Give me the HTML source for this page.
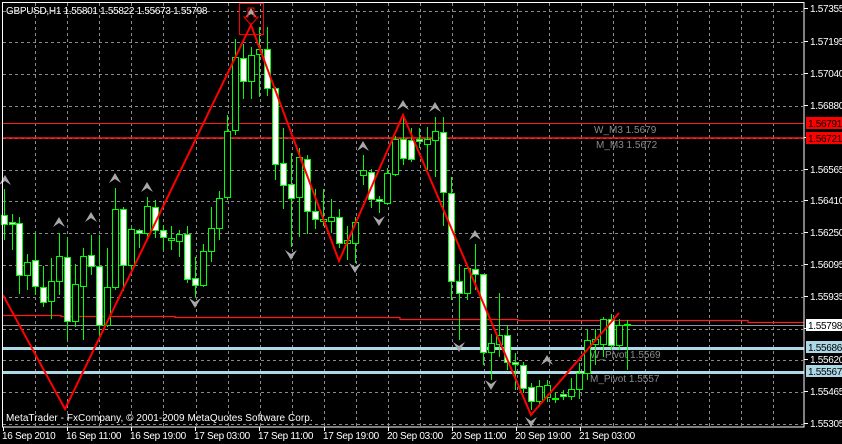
<!DOCTYPE html>
<html><head><meta charset="utf-8"><style>
html,body{margin:0;padding:0;background:#000;width:842px;height:444px;overflow:hidden}
svg{display:block}
text{font-family:"Liberation Sans",Arial,sans-serif;font-size:10px}
</style></head><body>
<svg id="s" width="842" height="444" xmlns="http://www.w3.org/2000/svg">
<rect width="842" height="444" fill="#000"/>
<g id="grid" stroke="#8a8a8a" stroke-width="1" stroke-dasharray="3,3"></g>
<g id="lines"></g>
<g id="candles"></g>
<g id="arrows" fill="#a8a8a8"></g>
<g id="overlay"></g>
<rect x="2.5" y="2.5" width="801.5" height="424.5" fill="none" stroke="#fff" stroke-width="1"/>
<g id="axis" fill="#fff"></g>
</svg>
<script>
var NS="http://www.w3.org/2000/svg";
function el(p,t,a,txt){var e=document.createElementNS(NS,t);for(var k in a)e.setAttribute(k,a[k]);if(txt!=null)e.textContent=txt;document.getElementById(p).appendChild(e);return e;}
for(var k=0;k<14;k++){var y=Math.round(10.6+31.8*k)+0.5;el('grid','line',{x1:3,x2:803,y1:y,y2:y});}
for(var k=0;k<24;k++){var x=Math.round(35+32.1*k)+0.5;el('grid','line',{x1:x,x2:x,y1:3,y2:426});}
el('lines','line',{x1:3,x2:804,y1:123.5,y2:123.5,stroke:'#ff1a1a','stroke-width':1});
el('lines','line',{x1:3,x2:804,y1:138,y2:138,stroke:'#ff1a1a','stroke-width':1.5});
el('lines','line',{x1:3,x2:804,y1:325.5,y2:325.5,stroke:'#8c96a0','stroke-width':1});
el('lines','polyline',{points:'3,315.5 61,315.5 61,316.5 175,316.5 175,317.5 400,317.5 400,319.5 518,319.5 518,320.5 748,320.5 748,322.5 804,322.5',fill:'none',stroke:'#ff1a1a','stroke-width':1.2});
el('lines','rect',{x:3,y:347,width:801,height:3,fill:'#add8e6'});
el('lines','rect',{x:3,y:371,width:801,height:3,fill:'#add8e6'});
el('lines','text',{x:594,y:133,fill:'#8a8a8a'},'W_M3 1.5679');
el('lines','text',{x:596,y:148,fill:'#8a8a8a'},'M_M3 1.5672');
el('lines','text',{x:590,y:358,fill:'#8a8a8a'},'W_Pivot 1.5569');
el('lines','text',{x:590,y:382,fill:'#8a8a8a'},'M_Pivot 1.5557');
var C=[
[4,215,224,189,240,1],[12,222,224,214,250,1],[19,223,275,217,294,1],[27,262,275,254,290,0],[35,260,286,233,295,1],
[43,287,302,266,307,1],[51,281,301,258,319,0],[59,256,281,233,295,0],[67,257,321,237,340,1],[75,284,321,264,327,0],
[83,256,286,248,340,0],[91,255,266,235,275,1],[99,266,325,235,340,1],[107,287,325,248,327,0],[115,209,287,188,290,0],
[123,209,265,207,291,1],[131,229,265,228,270,0],[139,230,233,229,248,1],[147,206,233,197,240,0],[155,207,230,200,238,1],
[163,230,237,225,251,1],[171,238,240,226,250,0],[179,234,241,230,257,0],[187,234,279,226,283,1],[195,278,285,257,297,1],
[203,251,285,244,287,0],[211,228,251,207,262,0],[219,198,228,191,240,0],[227,131,197,115,200,0],[235,57,130,39,135,0],
[243,58,81,44,99,1],[251,55,81,47,99,0],[259,49,54,27,97,0],[267,49,88,27,96,1],[275,88,164,87,180,1],
[283,163,185,128,209,1],[291,184,198,153,247,1],[299,157,197,148,237,0],[307,159,211,155,234,1],[315,211,219,189,229,1],
[323,219,221,189,226,0],[331,217,221,199,233,0],[339,217,243,209,248,1],[347,240,243,226,260,0],[355,222,243,217,263,0],
[363,170,175,155,185,0],[371,172,199,169,208,1],[379,199,201,196,213,1],[387,173,203,168,205,0],[395,139,174,136,176,0],
[403,139,158,115,165,1],[411,140,159,128,162,1],[419,139,141,128,148,1],[427,139,144,127,170,0],[435,131,140,117,177,0],
[443,132,192,117,226,1],[451,193,281,177,300,1],[459,281,293,264,340,1],[467,268,293,265,300,0],[475,269,274,244,290,1],
[483,274,352,274,365,1],[491,343,352,334,380,0],[499,335,344,293,357,0],[507,335,362,326,370,1],[515,362,364,353,390,1],
[523,365,388,362,393,1],[531,387,401,383,410,1],[539,386,401,380,406,0],[547,385,397,380,402,0],[555,398,399,392,403,0],
[563,394,396,390,400,1],[571,389,396,378,400,0],[579,373,389,363,399,0],[587,340,373,330,380,0],[595,339,344,329,365,0],
[603,319,344,317,357,0],[611,319,345,314,350,1],[619,325,345,319,350,0],[627,324,325,320,370,0]
];
C.forEach(function(c){
 el('candles','line',{x1:c[0]+.5,x2:c[0]+.5,y1:c[3],y2:c[4],stroke:'#00ff00','stroke-width':1});
 el('candles','rect',{x:c[0]-2.5,y:c[1]+.5,width:6,height:Math.max(1,c[2]-c[1]),fill:c[5]?'#fff':'#000',stroke:'#00ff00','stroke-width':1});
});
el('overlay','polyline',{points:'3,295 65,409 251,25 339,261 403,115 531,415 619,313',fill:'none',stroke:'#ff0000','stroke-width':2});
el('overlay','rect',{x:239.5,y:3.5,width:24,height:31,fill:'none',stroke:'#ff0000','stroke-width':1});
el('overlay','path',{d:'M248,8 H254 V17 H258 L251,25 L244,17 H248 Z',fill:'none',stroke:'#ff0000','stroke-width':1});
function up(x,y){el('arrows','path',{d:'M'+(x-6)+','+(y+5)+' L'+x+','+(y-5)+' L'+(x+6)+','+(y+5)+' L'+x+','+(y+1)+' Z'});}
function dn(x,y){el('arrows','path',{d:'M'+(x-6)+','+(y-5)+' L'+x+','+(y+5)+' L'+(x+6)+','+(y-5)+' L'+x+','+(y-1)+' Z'});}
[[5,180],[59,222],[91,217],[115,178],[147,187],[251,13],[363,146],[403,105],[435,107],[475,235],[547,360]].forEach(function(a){up(a[0],a[1]);});
[[195,303],[291,255],[355,268],[379,221],[459,347],[491,385],[531,422]].forEach(function(a){dn(a[0],a[1]);});
el('overlay','text',{x:6,y:14,fill:'#fff','letter-spacing':'-0.3'},'GBPUSD,H1  1.55801 1.55822 1.55673 1.55798');
el('overlay','text',{x:6,y:421,fill:'#fff','letter-spacing':'0.05'},'MetaTrader - FxCompany, © 2001-2009 MetaQuotes Software Corp.');
var P=['1.57355','1.57195','1.57040','1.56880','','1.56565','1.56410','1.56250','1.56095','1.55935','','1.55620','1.55465','1.55305'];
for(var k=0;k<14;k++){var y=Math.round(10.6+31.8*k)-1;if(k==0)y=8;el('axis','rect',{x:804,y:y,width:4,height:1});if(P[k])el('axis','text',{x:810,y:y+4,'letter-spacing':'-0.3'},P[k]);}
function lab(y,bg,fg,t){el('axis','rect',{x:806,y:y-6,width:36,height:12,fill:bg});el('axis','text',{x:808,y:y+4,fill:fg,'letter-spacing':'-0.3'},t);}
lab(123,'#ff0000','#000','1.56791');
lab(138,'#ff0000','#000','1.56721');
lab(325,'#ffffff','#000','1.55798');
lab(347,'#add8e6','#000','1.55686');
lab(371,'#add8e6','#000','1.55567');
var T=[[3,'16 Sep 2010'],[67,'16 Sep 11:00'],[131,'16 Sep 19:00'],[195,'17 Sep 03:00'],[259,'17 Sep 11:00'],[324,'17 Sep 19:00'],[388,'20 Sep 03:00'],[452,'20 Sep 11:00'],[516,'20 Sep 19:00'],[580,'21 Sep 03:00']];
T.forEach(function(t){el('axis','rect',{x:t[0],y:427,width:1,height:4});el('axis','text',{x:t[0]-1,y:439,'letter-spacing':'-0.3'},t[1]);});
</script>
</body></html>
